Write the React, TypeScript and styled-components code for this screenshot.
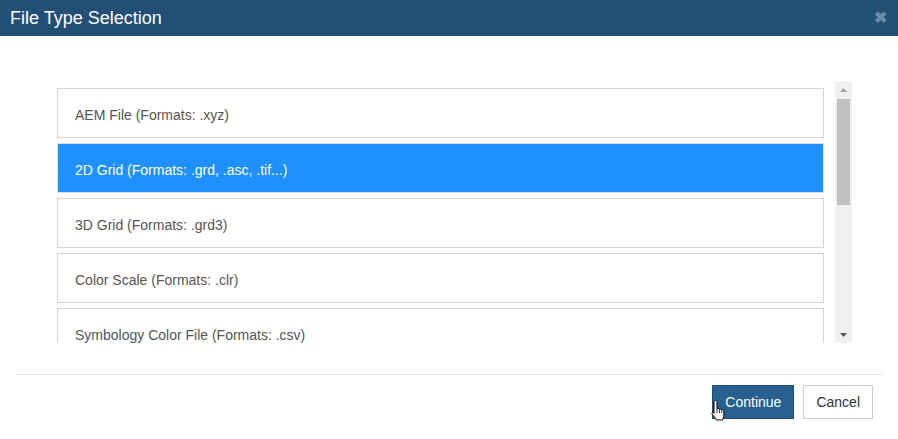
import React from "react";
import styled, { createGlobalStyle } from "styled-components";

const Global = createGlobalStyle`
  html, body { margin: 0; padding: 0; background: #fff; }
  body { font-family: Arial, "Liberation Sans", Helvetica, sans-serif; }
  * { box-sizing: border-box; }
`;

const Dialog = styled.div`
  width: 898px;
  height: 439px;
  background: #fff;
  display: flex;
  flex-direction: column;
  position: relative;
  overflow: hidden;
`;

const Header = styled.div`
  height: 36px;
  background: #234e76;
  display: flex;
  align-items: center;
  justify-content: space-between;
  padding: 0 11px 0 10px;
`;

const Title = styled.h4`
  margin: 0;
  color: #fff;
  font-size: 18px;
  font-weight: normal;
  line-height: 20px;
`;

const Close = styled.span`
  color: #7f9cb6;
  font-size: 16px;
  font-weight: bold;
  line-height: 1;
  opacity: 0.8;
`;

const Body = styled.div`
  padding: 45px 46px 0 57px;
  height: 338px;
  display: flex;
  gap: 11px;
`;

const List = styled.div`
  flex: 1;
  height: 262px;
  overflow: hidden;
  padding-top: 7px;
  display: flex;
  flex-direction: column;
  gap: 5px;
`;

const Item = styled.div<{ $selected?: boolean }>`
  flex: none;
  height: 50px;
  display: flex;
  align-items: center;
  padding: 3px 0 0 17px;
  font-size: 14px;
  color: ${(p) => (p.$selected ? "#fff" : "#555")};
  background: ${(p) => (p.$selected ? "#1e90ff" : "#fff")};
  border: 1px solid ${(p) => (p.$selected ? "#dddddd" : "#d4d4d4")};
`;

const ScrollBar = styled.div`
  width: 17px;
  height: 262px;
  background: #f1f1f1;
  display: flex;
  flex-direction: column;
  align-items: center;
`;

const Arrow = styled.div`
  height: 17px;
  width: 17px;
  display: flex;
  align-items: center;
  justify-content: center;
`;

const Track = styled.div`
  flex: 1;
  width: 100%;
  padding: 1px 2px;
`;

const Thumb = styled.div`
  height: 106px;
  background: #c1c1c1;
`;

const Footer = styled.div`
  margin: 0 15px;
  border-top: 1px solid #e5e5e5;
  padding: 10px 10px 0 0;
  display: flex;
  justify-content: flex-end;
  gap: 9px;
`;

const Button = styled.button<{ $primary?: boolean }>`
  height: 34px;
  padding: 0 12px;
  font-family: Arial, "Liberation Sans", sans-serif;
  font-size: 14px;
  border-radius: 0;
  border: 1px solid ${(p) => (p.$primary ? "#204d74" : "#ccc")};
  background: ${(p) => (p.$primary ? "#286090" : "#fff")};
  color: ${(p) => (p.$primary ? "#fff" : "#333")};
  cursor: pointer;
`;

const Cursor = styled.svg`
  position: absolute;
  left: 711px;
  top: 399px;
  pointer-events: none;
`;

const items = [
  "AEM File (Formats: .xyz)",
  "2D Grid (Formats: .grd, .asc, .tif...)",
  "3D Grid (Formats: .grd3)",
  "Color Scale (Formats: .clr)",
  "Symbology Color File (Formats: .csv)",
];

export default function App() {
  return (
    <Dialog>
      <Global />
      <Header>
        <Title>File Type Selection</Title>
        <Close>✖</Close>
      </Header>
      <Body>
        <List>
          {items.map((t, i) => (
            <Item key={t} $selected={i === 1}>
              {t}
            </Item>
          ))}
        </List>
        <ScrollBar>
          <Arrow>
            <svg width="7" height="4" viewBox="0 0 7 4">
              <path d="M0 4 L3.5 0 L7 4 Z" fill="#a3a3a3" />
            </svg>
          </Arrow>
          <Track>
            <Thumb />
          </Track>
          <Arrow>
            <svg width="7" height="4" viewBox="0 0 7 4">
              <path d="M0 0 L7 0 L3.5 4 Z" fill="#505050" />
            </svg>
          </Arrow>
        </ScrollBar>
      </Body>
      <Footer>
        <Button $primary>Continue</Button>
        <Button>Cancel</Button>
      </Footer>
      <Cursor width="16" height="28" viewBox="0 0 16 28">
        <path
          d="M4.5 1.5 C5.5 1.5 6 2.2 6 3 L6 10 C6.5 9.3 8 9.3 8.4 10.3 C9 9.6 10.4 9.8 10.7 10.9 C11.3 10.3 12.8 10.6 12.8 11.8 L12.8 16.5 C12.8 18.5 12 19.5 11.5 21 L5.5 21 C4.5 19 2.5 17 1 15 C0.5 14.2 1.2 13 2.3 13.6 L3 14.3 L3 3 C3 2.2 3.6 1.5 4.5 1.5 Z"
          fill="#fff"
          stroke="#000"
          strokeWidth="1"
        />
        <path d="M6 10 L6 14 M8.4 10.3 L8.4 14 M10.7 10.9 L10.7 14" stroke="#000" strokeWidth="0.8" />
      </Cursor>
    </Dialog>
  );
}
